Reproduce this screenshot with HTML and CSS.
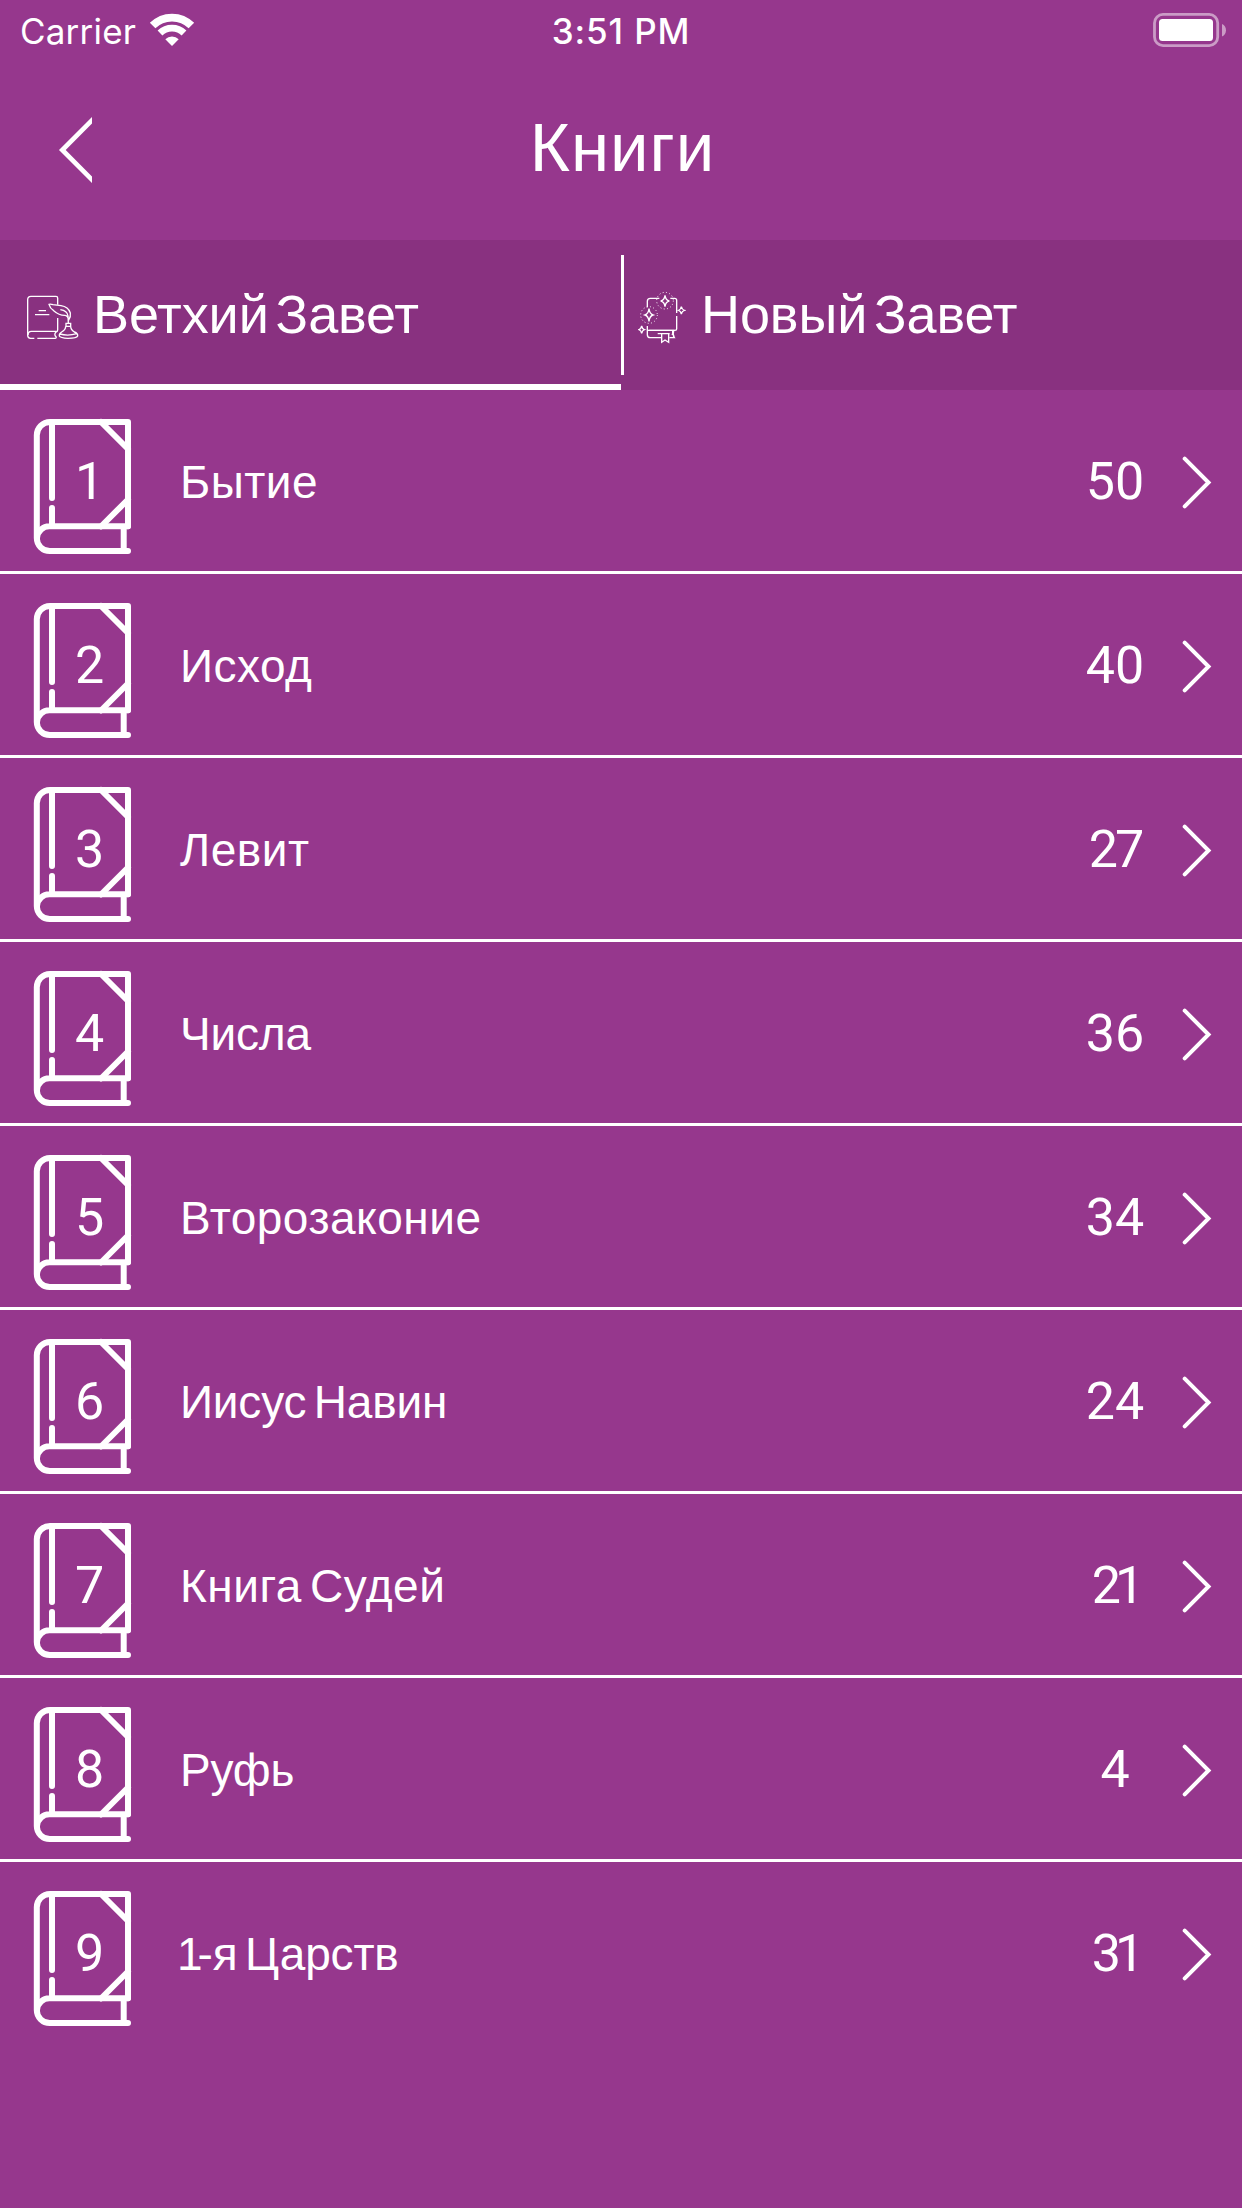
FILE: index.html
```
<!DOCTYPE html>
<html lang="ru">

<head>
    <meta charset="UTF-8" />
    <meta name="viewport" content="width=device-width, initial-scale=1" />
    <title>Книги</title>
    <link rel="stylesheet" href="styles.css">
</head>

<body>
    <!-- Общие иконки -->
    <svg class="sprite">
        <symbol id="book" viewBox="33 418 100 137">
            <path d="M128 526.3V422H50a13.2 13.2 0 0 0-13.2 13.2V538A13 13 0 0 0 50 551h78" />
            <path d="M128 526.3H50A12.4 12.4 0 0 0 37 538M123.7 527v24M52 422v76M52 508v18" />
            <path d="M101 422l27 27M101 526.5l27-27" />
        </symbol>
        <symbol id="arrow" viewBox="1182 456 30 53">
            <path d="M1184.7 458.7l23.8 23.8-23.8 23.8" />
        </symbol>
    </svg>

    <div class="status-bar">
        <div class="carrier">
            <span>Carrier</span>
            <svg class="wifi" viewBox="148 12 48 36">
                <path d="M152.6 25.6a27.4 27.4 0 0 1 38.8 0" stroke-width="7.8" />
                <path d="M160 33a17 17 0 0 1 24 0" stroke-width="6.8" />
                <path class="dot" d="M172 46l-6.7-6.8a9.5 9.5 0 0 1 13.4 0z" />
            </svg>
        </div>
        <div class="time">3:51 PM</div>
        <svg class="battery" viewBox="1152 12 75 36">
            <rect class="case" x="1154.5" y="14.4" width="63.2" height="31.2" rx="8.5" />
            <rect class="level" x="1159" y="19" width="54" height="22" rx="3.5" />
            <path class="nub" d="M1222 24c5.300 2 5.300 10.500 0 12.500z" />
        </svg>
    </div>

    <header class="header">
        <svg class="back" viewBox="58 116 34 68">
            <path d="M96 116.300L62.300 150 96 183.700" />
        </svg>
        <h1>Книги</h1>
    </header>

    <nav class="tabs">
        <div class="tab active">
            <svg class="icon-old" viewBox="78 75 159 135">
                <path d="M173 104V84q0-5-5-5H93q-10 0-10 10v107q0 9 9 9h11M112 205h54q4-1 2-5-7-6 0-14 5-1 5-6v-36" />
                <path d="M84 195q0-11 10-11h76M116 122h22M105 134h43" />
                <path d="M147 103q4-2 12 1l24 3q22 3 28 22 2 12-5 21-3-14-12-14-17 0-33-14-11-7-14-19zM181 119q21 3 23 19l1 22" />
                <path d="M198 160h14v9h-14zM197 169q0 11-12 17-8 5-7 12 3 6 26 7 26 0 29-7 1-8-10-12-11-7-11-17M180 192q24 7 50-1" />
            </svg>
            <span>Ветхий Завет</span>
        </div>
        <div class="divider"></div>
        <div class="tab">
            <svg class="icon-new" viewBox="114 153 144 159">
                <path d="M142 202v-18q0-9 9-9h27M211 175h13q6 0 6 6v38M230 228v39q0 4-5 4h-82M142 258v26q0 9 9 9h33M208 293h15q-6-9-2-21M218 272v9q0 2-3 2M173 281h36" />
                <path d="M185 282v25l10-7 11 7v-25M146 271h78" />
                <path d="M195 166q2 15 13 17-11 2-13 17-2-15-13-17 11-2 13-17zM147 206q2 16 12 19-10 3-12 19-2-16-12-19 10-3 12-19z" />
                <path d="M244 200q2 9 9 11-7 2-9 11-2-9-8-11 6-2 8-11zM125 258q2 9 8 11-6 2-8 11-2-9-8-11 6-2 8-11z" />
                <g class="glow">
                    <circle cx="195" cy="182" r="25" />
                    <circle cx="147" cy="225" r="25" />
                </g>
            </svg>
            <span>Новый Завет</span>
        </div>
    </nav>

    <ul class="books">
        <li class="book">
            <div class="cover"><svg><use href="#book" /></svg><span class="num">1</span></div>
            <span class="name">Бытие</span>
            <span class="count">50</span>
            <svg class="arrow"><use href="#arrow" /></svg>
        </li>
        <li class="book">
            <div class="cover"><svg><use href="#book" /></svg><span class="num">2</span></div>
            <span class="name">Исход</span>
            <span class="count">40</span>
            <svg class="arrow"><use href="#arrow" /></svg>
        </li>
        <li class="book">
            <div class="cover"><svg><use href="#book" /></svg><span class="num">3</span></div>
            <span class="name">Левит</span>
            <span class="count narrow">27</span>
            <svg class="arrow"><use href="#arrow" /></svg>
        </li>
        <li class="book">
            <div class="cover"><svg><use href="#book" /></svg><span class="num">4</span></div>
            <span class="name short">Числа</span>
            <span class="count">36</span>
            <svg class="arrow"><use href="#arrow" /></svg>
        </li>
        <li class="book">
            <div class="cover"><svg><use href="#book" /></svg><span class="num">5</span></div>
            <span class="name">Второзаконие</span>
            <span class="count">34</span>
            <svg class="arrow"><use href="#arrow" /></svg>
        </li>
        <li class="book">
            <div class="cover"><svg><use href="#book" /></svg><span class="num">6</span></div>
            <span class="name short">Иисус Навин</span>
            <span class="count">24</span>
            <svg class="arrow"><use href="#arrow" /></svg>
        </li>
        <li class="book">
            <div class="cover"><svg><use href="#book" /></svg><span class="num">7</span></div>
            <span class="name">Книга Судей</span>
            <span class="count ends-one">21</span>
            <svg class="arrow"><use href="#arrow" /></svg>
        </li>
        <li class="book">
            <div class="cover"><svg><use href="#book" /></svg><span class="num">8</span></div>
            <span class="name short">Руфь</span>
            <span class="count">4</span>
            <svg class="arrow"><use href="#arrow" /></svg>
        </li>
        <li class="book">
            <div class="cover"><svg><use href="#book" /></svg><span class="num">9</span></div>
            <span class="name short"><span class="first">1</span>-я Царств</span>
            <span class="count ends-one">31</span>
            <svg class="arrow"><use href="#arrow" /></svg>
        </li>
    </ul>
</body>

</html>
```

FILE: styles.css
```
* {
    box-sizing: border-box;
    margin: 0;
    padding: 0;
}

body {
    width: 1242px;
    height: 2208px;
    overflow: hidden;
    font-family: "Liberation Sans", Arial, sans-serif;
    background-color: #96378d;
    color: #fff;
}

svg {
    display: block;
    flex-shrink: 0;
    fill: none;
    stroke: #fff;
}

.sprite {
    width: 0;
    height: 0;
    position: absolute;
}

/* Статус-бар */
.status-bar {
    display: grid;
    grid-template-columns: 1fr auto 1fr;
    height: 60px;
    padding: 12px 15px 0;
    font-family: Inter, sans-serif;
    font-size: 35px;
    line-height: 38px;
}

.carrier {
    display: flex;
    gap: 12px;
    padding-left: 5px;
    letter-spacing: 0.2px;
}

.wifi {
    width: 48px;
    height: 36px;
}

.wifi .dot {
    fill: #fff;
    stroke: none;
}

.time {
    font-weight: 500;
    letter-spacing: 0.9px;
}

.battery {
    width: 75px;
    height: 36px;
    justify-self: end;
}

.battery .case {
    stroke-width: 2.8;
    opacity: 0.5;
}

.battery .level,
.battery .nub {
    fill: #fff;
    stroke: none;
}

.battery .nub {
    opacity: 0.5;
}

/* Шапка */
.header {
    display: grid;
    grid-template-columns: 92px 1fr 92px;
    height: 180px;
    padding-top: 56px;
}

.header h1 {
    font-size: 69px;
    font-weight: normal;
    line-height: 72px;
    letter-spacing: 1px;
    margin: -4px 0 0 3px;
    text-align: center;
}

.back {
    width: 34px;
    height: 68px;
    margin-left: 58px;
    stroke-width: 4.7;
}

/* Вкладки */
.tabs {
    display: flex;
    height: 150px;
    background-color: #893180;
    font-size: 54px;
    line-height: 62px;
    letter-spacing: -0.1px;
    word-spacing: -8px;
}

.tab {
    display: flex;
    align-items: flex-start;
    width: 621px;
    padding: 43px 0 0 26px;
    border-bottom: 6px solid transparent;
}

.tab.active {
    border-bottom-color: #fff;
}

.divider + .tab {
    width: 618px;
    padding-left: 14px;
}

.divider {
    width: 3px;
    height: 120px;
    margin-top: 15px;
    background: #fff;
}

.icon-old {
    width: 53px;
    height: 45px;
    margin: 12px 14px 0 0;
    stroke-width: 4;
}

.icon-new {
    width: 48px;
    height: 53px;
    margin: 8px 15px 0 0;
    stroke-width: 4;
}

.glow {
    stroke-width: 3;
    stroke-dasharray: 3 7;
}

/* Список книг */
.books {
    list-style: none;
}

.book {
    display: flex;
    align-items: flex-start;
    height: 184px;
    padding: 28px 30px 0 33px;
    border-bottom: 3px solid #fff;
}

.book:last-child {
    border-bottom: none;
}

.cover {
    display: grid;
    width: 100px;
    height: 137px;
}

.cover svg {
    grid-area: 1 / 1;
    width: 100px;
    height: 137px;
    stroke-width: 6;
    stroke-linecap: round;
    stroke-linejoin: round;
}

.num,
.count {
    font-family: Roboto, sans-serif;
    font-weight: 400;
    font-size: 52px;
    line-height: 60px;
    text-align: center;
}

.num {
    grid-area: 1 / 1;
    padding: 34px 0 0 13px;
}

.name {
    flex: 1;
    padding: 37px 0 0 47px;
    font-size: 46px;
    line-height: 54px;
    letter-spacing: 0.5px;
    word-spacing: -5px;
}

.name.short {
    letter-spacing: -0.2px;
}

.name .first {
    letter-spacing: -5px;
    margin-left: -3px;
}

.count {
    width: 90px;
    margin-right: 22px;
    padding-top: 34px;
}

.count.narrow {
    letter-spacing: -3px;
}

.count.ends-one {
    letter-spacing: -6px;
}

.arrow {
    width: 30px;
    height: 53px;
    margin-top: 38px;
    stroke-width: 4;
    stroke-linecap: round;
}
```
